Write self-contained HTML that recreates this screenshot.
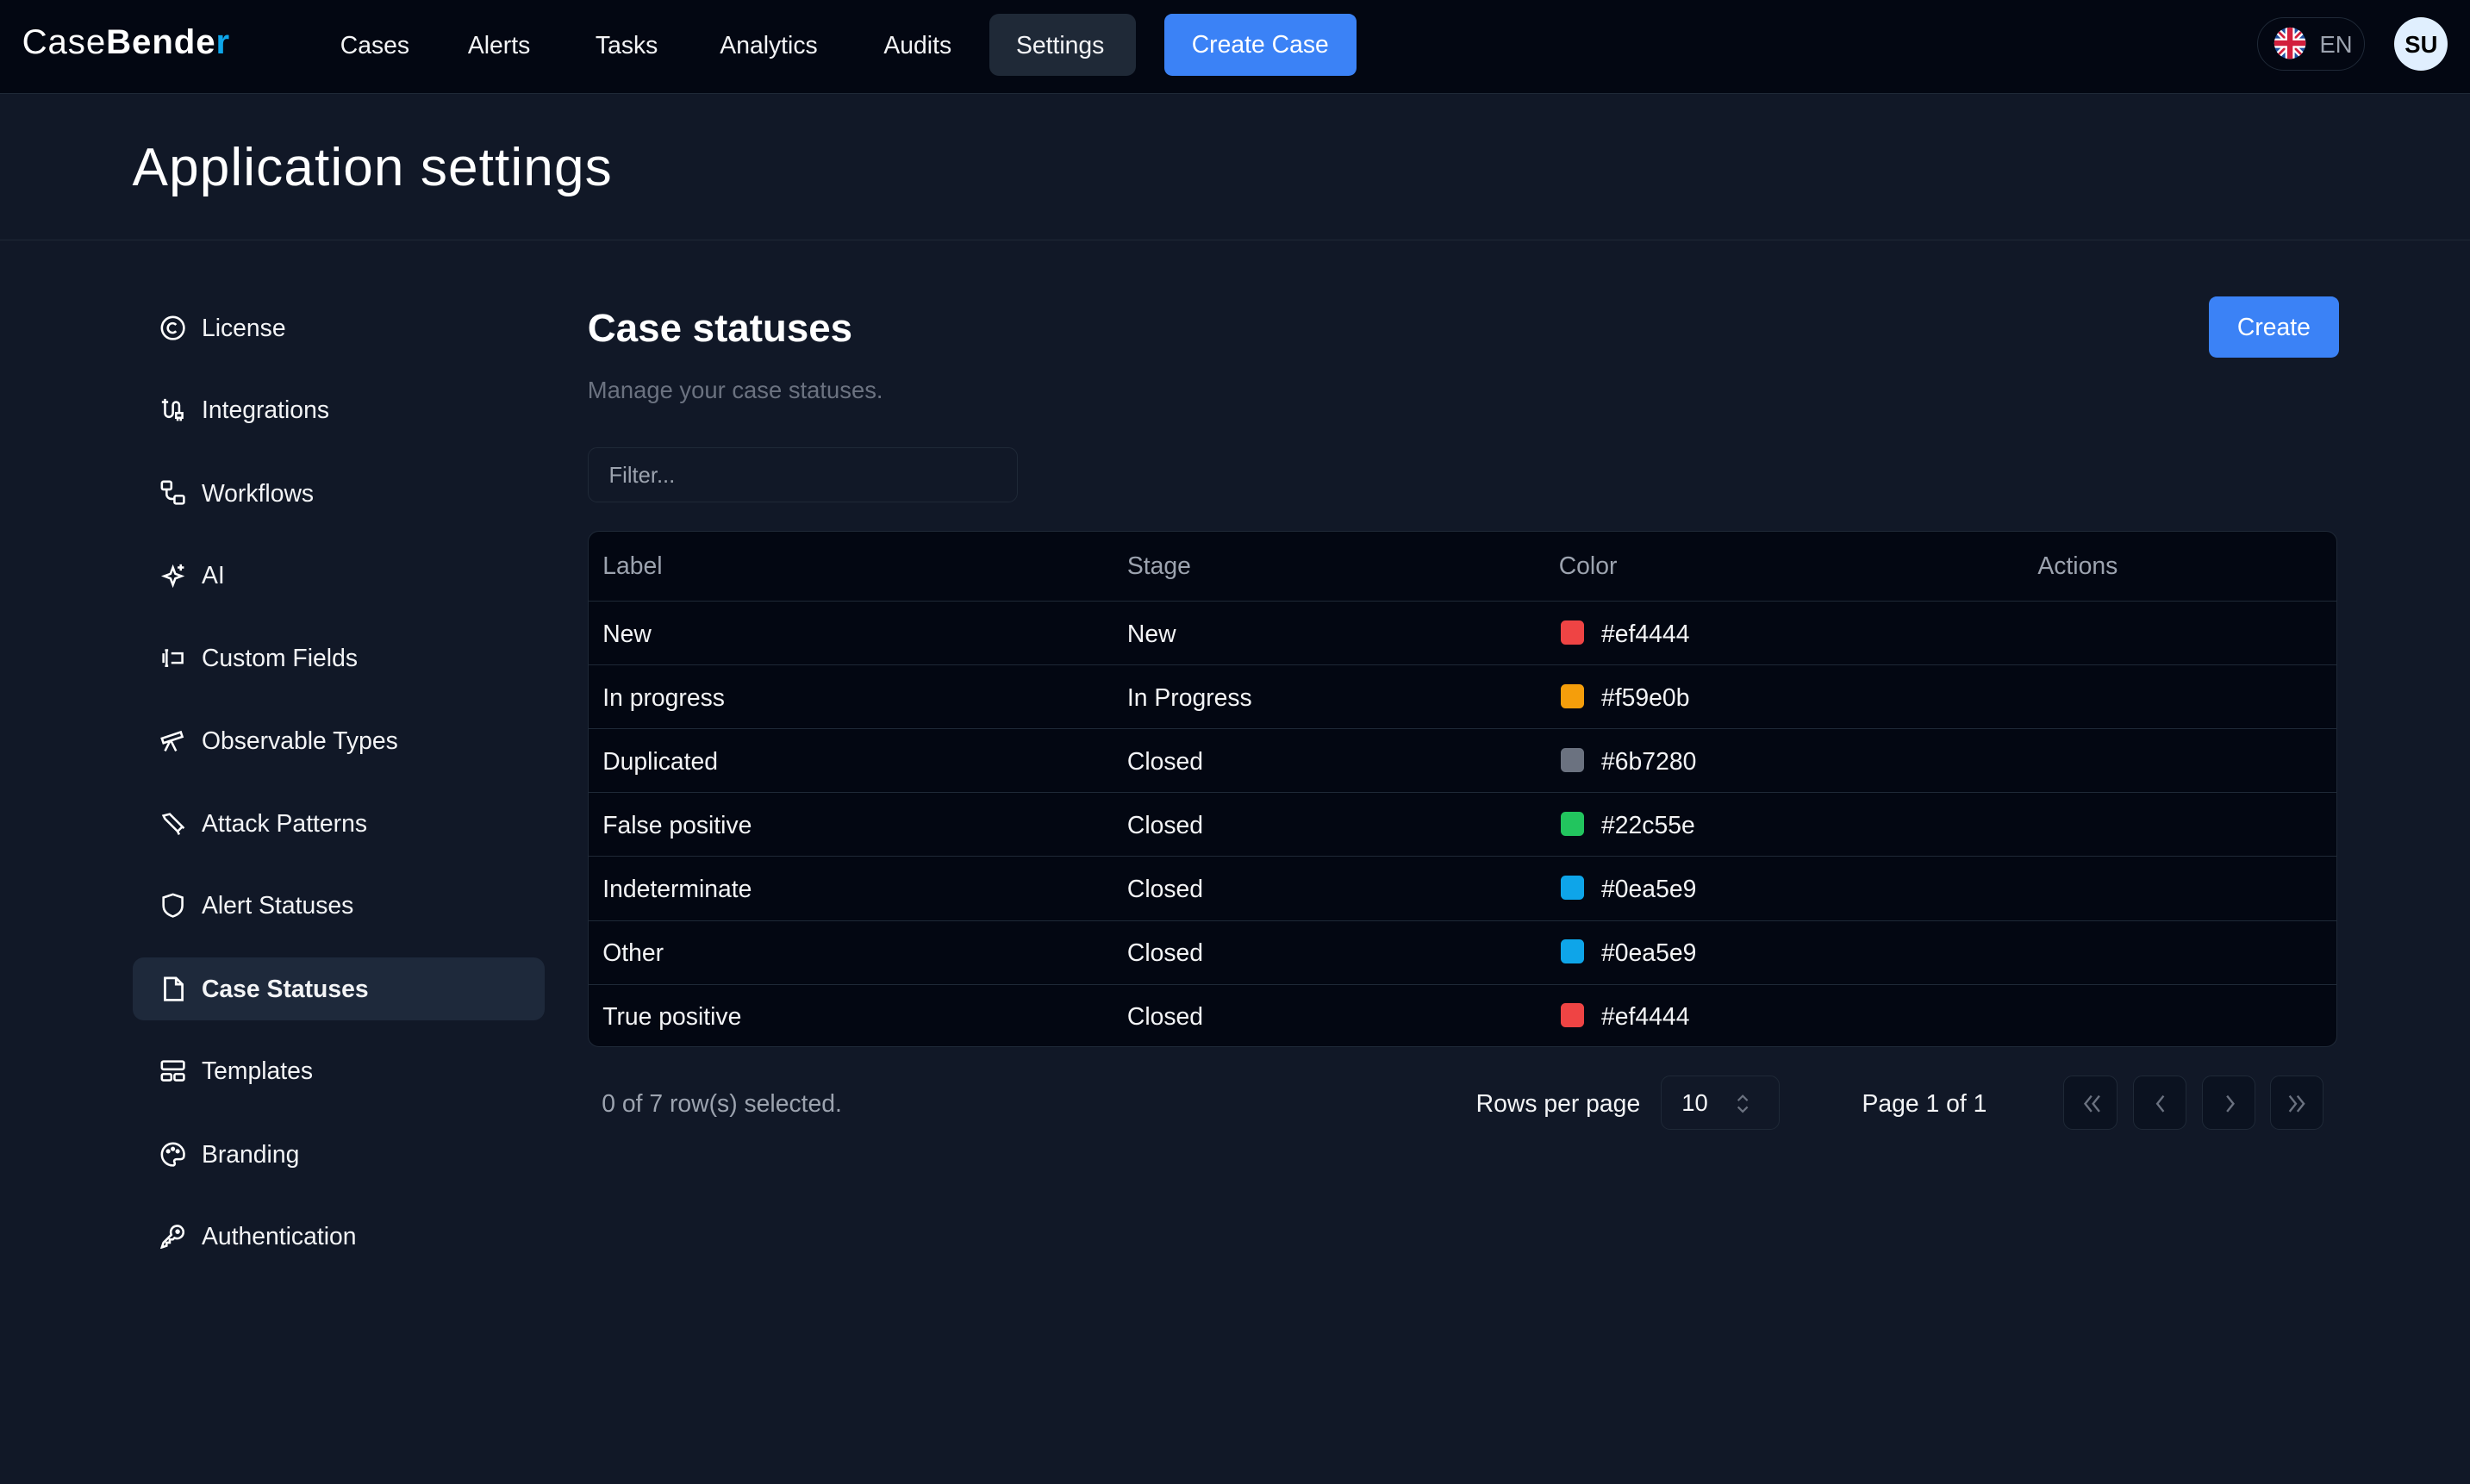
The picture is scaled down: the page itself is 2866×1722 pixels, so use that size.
<!DOCTYPE html>
<html><head><meta charset="utf-8"><style>
html,body{margin:0;padding:0;background:#111827;}
body{width:1568px;height:942px;zoom:1.82781;overflow:hidden;font-family:"Liberation Sans",sans-serif;color:#f3f4f6;position:relative}
.top{position:absolute;left:0;top:0;width:1568px;height:59px;background:#030712;border-bottom:1px solid #1f2937}
.logo{position:absolute;left:14px;top:14px;font-size:22px;color:#fff;letter-spacing:0.5px}
.nav a{position:absolute;top:20px;font-size:15.5px;color:#f3f4f6}
.set{position:absolute;left:628px;top:9px;width:93px;height:39px;background:#1f2937;border-radius:6px}
.cc{position:absolute;left:739px;top:9px;width:122px;height:39px;background:#3b82f6;border-radius:5px;color:#fff;font-size:15.5px;text-align:center;line-height:40px}
.lang{position:absolute;left:1433px;top:11px;width:67px;height:33px;border:1px solid #1f2937;border-radius:18px}
.av{position:absolute;left:1520px;top:11px;width:34px;height:34px;border-radius:50%;background:#e0effe;color:#000;font-weight:bold;font-size:15px;text-align:center;line-height:35px}
.head{position:absolute;left:0;top:60px;width:1568px;height:92px;border-bottom:1px solid #1f2937}
.head h1{position:absolute;left:84px;top:27px;margin:0;font-size:34px;font-weight:normal;color:#fff;letter-spacing:0.6px}
.side div{position:absolute;left:84px;width:262px;height:40px;border-radius:7px;font-size:15.5px;line-height:41px}
.side svg{position:absolute;left:18px;top:12px}
.side span{position:absolute;left:44px}
.act{background:#1e293b;font-weight:bold}
h2{position:absolute;left:373px;top:194px;margin:0;font-size:25px;color:#fff}
.sub{position:absolute;left:373px;top:239px;font-size:15px;color:#6b7280}
.filter{position:absolute;left:373px;top:284px;width:273px;height:35px;border:1px solid #1f2937;border-radius:6px;font-size:14px;color:#9ca3af;line-height:36px;text-indent:13px;box-sizing:border-box}
.btn{position:absolute;left:1402px;top:188px;width:83px;height:39px;background:#3b82f6;border-radius:5px;text-align:center;line-height:40px;font-size:15.5px;color:#fff}
.tbl{position:absolute;left:373px;top:337px;width:1111px;height:328px;border:1px solid #1f2937;border-radius:7px;background:#030712;box-sizing:border-box;overflow:hidden}
.row{position:absolute;left:0;width:1111px;height:40px;border-top:1px solid #1f2937;font-size:15.5px;color:#f3f4f6}
.row span{position:absolute;top:12px}
.hd span{color:#9ca3af;top:14px}
.sw{position:absolute;left:617px;top:12px;width:15px;height:15px;border-radius:3px}
.foot{position:absolute;top:692px;font-size:15.5px}
.pb{position:absolute;top:683px;width:34px;height:34px;border:1px solid #1f2937;border-radius:6px;background:#0b1220;box-sizing:border-box}
.pb svg{position:absolute;left:10px;top:10px}
</style></head><body>
<div class="top">
 <div class="logo">Case<b>Bende</b><b style="color:#0ea5e9">r</b></div>
 <div class="set"></div>
 <div class="nav"><a style="left:216px">Cases</a><a style="left:297px">Alerts</a><a style="left:378px">Tasks</a><a style="left:457px">Analytics</a><a style="left:561px">Audits</a><a style="left:645px">Settings</a></div>
 <div class="cc">Create Case</div>
 <div class="lang"><svg style="position:absolute;left:9px;top:5px" width="22" height="22" viewBox="0 0 22 22"><clipPath id="c"><circle cx="11" cy="11" r="10"/></clipPath><g clip-path="url(#c)"><rect width="22" height="22" fill="#1f4fa0"/><path d="M0 0L22 22M22 0L0 22" stroke="#fff" stroke-width="4"/><path d="M0 0L22 22M22 0L0 22" stroke="#d21f3c" stroke-width="1.5"/><path d="M11 0V22M0 11H22" stroke="#fff" stroke-width="6"/><path d="M11 0V22M0 11H22" stroke="#d21f3c" stroke-width="3.5"/></g></svg><span style="position:absolute;left:39px;top:8px;color:#9ca3af;font-size:15px">EN</span></div>
 <div class="av">SU</div>
</div>
<div class="head"><h1>Application settings</h1></div>
<div class="side">
 <div style="top:188px"><svg width="16" height="16" viewBox="0 0 16 16" fill="none" stroke="#fff" stroke-width="1.4"><circle cx="8" cy="8" r="7"/><path d="M10 6a3 3 0 1 0 0 4"/></svg><span>License</span></div>
 <div style="top:240px"><svg width="16" height="16" viewBox="0 0 16 16" fill="none" stroke="#fff" stroke-width="1.4"><path d="M1 3h4M3 1v2M3 3v7a2.5 2.5 0 0 0 5 0V5a2 2 0 0 1 4 0v5M10 10h4v3h-4zM11 13v2M13 13v2"/></svg><span>Integrations</span></div>
 <div style="top:293px"><svg width="16" height="16" viewBox="0 0 16 16" fill="none" stroke="#fff" stroke-width="1.4"><rect x="1" y="1" width="6" height="5" rx="1"/><rect x="9" y="10" width="6" height="5" rx="1"/><path d="M4 6v3a3 3 0 0 0 3 3h2"/></svg><span>Workflows</span></div>
 <div style="top:345px"><svg width="16" height="16" viewBox="0 0 16 16" fill="none" stroke="#fff" stroke-width="1.4"><path d="M8 3l1.5 4 4 1.5-4 1.5L8 14l-1.5-4-4-1.5 4-1.5z"/><path d="M13 1v4M11 3h4"/></svg><span>AI</span></div>
 <div style="top:398px"><svg width="16" height="16" viewBox="0 0 16 16" fill="none" stroke="#fff" stroke-width="1.4"><path d="M3 3h2M3 13h2M4 3v10M7 5h7v6H7M2 5v6"/></svg><span>Custom Fields</span></div>
 <div style="top:450px"><svg width="16" height="16" viewBox="0 0 16 16" fill="none" stroke="#fff" stroke-width="1.4"><path d="M1 7l12-4 1 3-12 4zM6 9l-3 6M7 9l3 6"/></svg><span>Observable Types</span></div>
 <div style="top:503px"><svg width="16" height="16" viewBox="0 0 16 16" fill="none" stroke="#fff" stroke-width="1.4"><path d="M2 3l4-1 8 8-3 3-8-8zM11 13l1 2M14 10l1 1"/></svg><span>Attack Patterns</span></div>
 <div style="top:555px"><svg width="16" height="16" viewBox="0 0 16 16" fill="none" stroke="#fff" stroke-width="1.4"><path d="M8 1l6 2v5c0 4-3 6-6 7-3-1-6-3-6-7V3z"/></svg><span>Alert Statuses</span></div>
 <div class="act" style="top:608px"><svg width="16" height="16" viewBox="0 0 16 16" fill="none" stroke="#fff" stroke-width="1.5"><path d="M3 1h7l4 4v10H3z"/><path d="M10 1v4h4"/></svg><span>Case Statuses</span></div>
 <div style="top:660px"><svg width="16" height="16" viewBox="0 0 16 16" fill="none" stroke="#fff" stroke-width="1.4"><rect x="1" y="2" width="14" height="5" rx="1"/><rect x="1" y="10" width="6" height="4" rx="1"/><rect x="9" y="10" width="6" height="4" rx="1"/></svg><span>Templates</span></div>
 <div style="top:713px"><svg width="16" height="16" viewBox="0 0 16 16" fill="none" stroke="#fff" stroke-width="1.4"><path d="M8 1a7 7 0 0 0 0 14c1 0 1.5-1 1-2s0-2 1.5-2H13a2 2 0 0 0 2-2A7 7 0 0 0 8 1z"/><circle cx="5" cy="6" r=".7"/><circle cx="8" cy="4.5" r=".7"/><circle cx="11" cy="6" r=".7"/></svg><span>Branding</span></div>
 <div style="top:765px"><svg width="16" height="16" viewBox="0 0 16 16" fill="none" stroke="#fff" stroke-width="1.4"><path d="M1 15l1-3 5-5a4 4 0 1 1 2 2l-1 1H6v2H4v2z"/><circle cx="11" cy="5" r=".8"/></svg><span>Authentication</span></div>
</div>
<h2>Case statuses</h2>
<div class="sub">Manage your case statuses.</div>
<div class="filter">Filter...</div>
<div class="btn">Create</div>
<div class="tbl">
 <div class="row hd" style="top:-1px;height:44px;border-top:none"><span style="left:9px">Label</span><span style="left:342px">Stage</span><span style="left:616px">Color</span><span style="left:920px">Actions</span></div>
 <div class="row" style="top:44px"><span style="left:9px">New</span><span style="left:342px">New</span><i class="sw" style="background:#ef4444"></i><span style="left:643px">#ef4444</span></div>
 <div class="row" style="top:84.5px"><span style="left:9px">In progress</span><span style="left:342px">In Progress</span><i class="sw" style="background:#f59e0b"></i><span style="left:643px">#f59e0b</span></div>
 <div class="row" style="top:125px"><span style="left:9px">Duplicated</span><span style="left:342px">Closed</span><i class="sw" style="background:#6b7280"></i><span style="left:643px">#6b7280</span></div>
 <div class="row" style="top:165.5px"><span style="left:9px">False positive</span><span style="left:342px">Closed</span><i class="sw" style="background:#22c55e"></i><span style="left:643px">#22c55e</span></div>
 <div class="row" style="top:206px"><span style="left:9px">Indeterminate</span><span style="left:342px">Closed</span><i class="sw" style="background:#0ea5e9"></i><span style="left:643px">#0ea5e9</span></div>
 <div class="row" style="top:246.5px"><span style="left:9px">Other</span><span style="left:342px">Closed</span><i class="sw" style="background:#0ea5e9"></i><span style="left:643px">#0ea5e9</span></div>
 <div class="row" style="top:287px"><span style="left:9px">True positive</span><span style="left:342px">Closed</span><i class="sw" style="background:#ef4444"></i><span style="left:643px">#ef4444</span></div>
</div>
<div class="foot" style="left:382px;color:#9ca3af">0 of 7 row(s) selected.</div>
<div class="foot" style="left:937px">Rows per page</div>
<div style="position:absolute;left:1054px;top:683px;width:76px;height:34px;border:1px solid #1f2937;border-radius:6px;box-sizing:border-box;font-size:15px;line-height:34px;text-indent:13px">10<svg style="position:absolute;left:47px;top:10px" width="10" height="14" viewBox="0 0 10 14" fill="none" stroke="#6b7280" stroke-width="1.2"><path d="M2 5l3-3 3 3M2 9l3 3 3-3"/></svg></div>
<div class="foot" style="left:1182px">Page 1 of 1</div>
<div class="pb" style="left:1310px"><svg width="14" height="14" viewBox="0 0 14 14" fill="none" stroke="#6b7280" stroke-width="1.3"><path d="M7 2L3 7l4 5M12 2L8 7l4 5"/></svg></div>
<div class="pb" style="left:1354px"><svg width="14" height="14" viewBox="0 0 14 14" fill="none" stroke="#6b7280" stroke-width="1.3"><path d="M9 2L5 7l4 5"/></svg></div>
<div class="pb" style="left:1398px"><svg width="14" height="14" viewBox="0 0 14 14" fill="none" stroke="#6b7280" stroke-width="1.3"><path d="M5 2l4 5-4 5"/></svg></div>
<div class="pb" style="left:1441px"><svg width="14" height="14" viewBox="0 0 14 14" fill="none" stroke="#6b7280" stroke-width="1.3"><path d="M2 2l4 5-4 5M7 2l4 5-4 5"/></svg></div>
</body></html>
